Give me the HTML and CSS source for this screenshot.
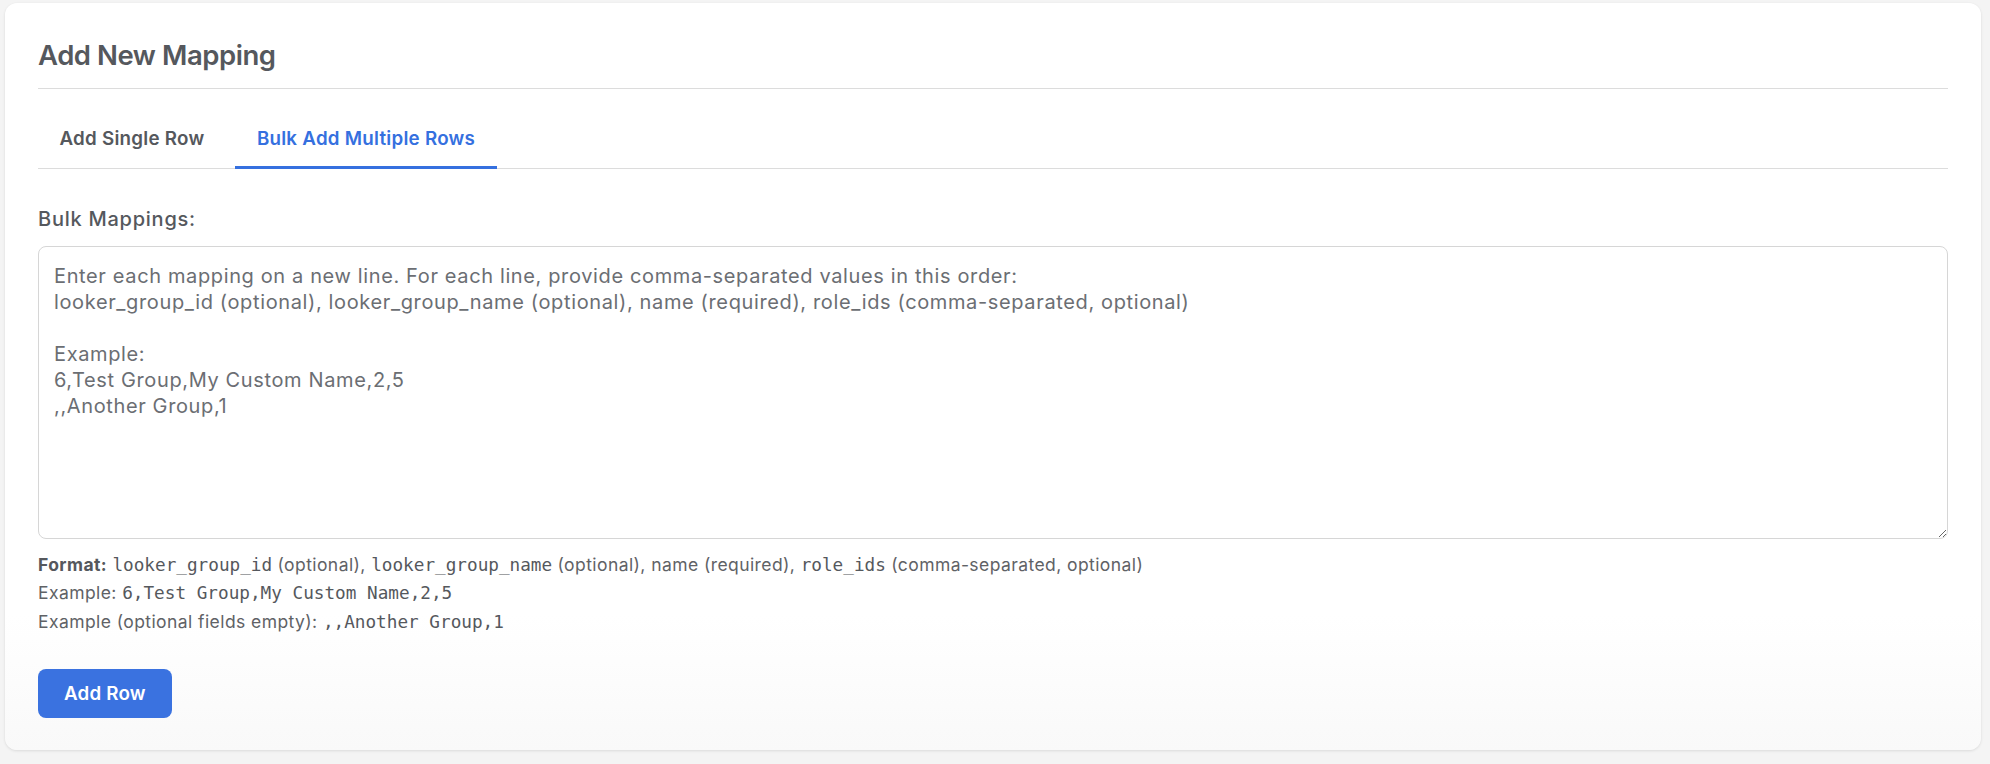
FILE: index.html
```html
<!DOCTYPE html>
<html lang="en">
<head>
<meta charset="utf-8">
<title>Add New Mapping</title>
<link rel="stylesheet" href="styles.css">
</head>
<body>
<div class="page">
  <section class="card">
    <h2 class="card-title">Add New Mapping</h2>
    <div class="tabs">
      <button class="tab">Add Single Row</button>
      <button class="tab tab-active">Bulk Add Multiple Rows</button>
    </div>
    <label class="field-label" for="bulk">Bulk Mappings:</label>
    <textarea id="bulk" class="bulk-input" placeholder="Enter each mapping on a new line. For each line, provide comma-separated values in this order:&#10;looker_group_id (optional), looker_group_name (optional), name (required), role_ids (comma-separated, optional)&#10;&#10;Example:&#10;6,Test Group,My Custom Name,2,5&#10;,,Another Group,1"></textarea>
    <div class="help">
      <div class="help-line"><strong>Format:</strong> <code>looker_group_id</code> (optional), <code>looker_group_name</code> (optional), name (required), <code>role_ids</code> (comma-separated, optional)</div>
      <div class="help-line">Example: <code>6,Test Group,My Custom Name,2,5</code></div>
      <div class="help-line">Example (optional fields empty): <code>,,Another Group,1</code></div>
    </div>
    <button class="btn-primary">Add Row</button>
  </section>
</div>
</body>
</html>
```

FILE: styles.css
```css
html, body {
  margin: 0;
  padding: 0;
  background: #f4f4f4;
}

body {
  font-family: Inter, "Noto Sans", "Liberation Sans", sans-serif;
  color: #55585d;
}

.page {
  padding: 3px 9px 13px 5px;
}

.card {
  background: linear-gradient(to bottom, #ffffff 82%, #f9f9f9 100%);
  border-radius: 12px;
  box-shadow: 0 1px 3px rgba(0, 0, 0, 0.10), 0 0 1px rgba(0, 0, 0, 0.06);
  padding: 33px 33px 32.4px 33px;
}

.card-title {
  margin: 2.4px 0 0 0;
  padding-bottom: 15.3px;
  border-bottom: 1px solid #dcdcdc;
  font-size: 27.5px;
  font-weight: 600;
  letter-spacing: -0.45px;
  line-height: normal;
  color: #55585d;
}

.tabs {
  display: flex;
  gap: 9.5px;
  margin-top: 22.8px;
  border-bottom: 1px solid #dcdcdc;
}

.tab {
  font-family: inherit;
  font-size: 18.75px;
  font-weight: 600;
  letter-spacing: 0.25px;
  line-height: normal;
  color: #55585d;
  background: none;
  border: none;
  border-bottom: 3px solid transparent;
  margin-bottom: -1px;
  padding: 16px 21.5px 15.3px;
  cursor: pointer;
}

.tab-active {
  color: #3570df;
  border-bottom-color: #3570df;
}

.field-label {
  display: block;
  margin-top: 38.6px;
  margin-bottom: 14.7px;
  font-size: 20px;
  font-weight: 500;
  letter-spacing: 0.75px;
  line-height: normal;
  color: #55585d;
}

.bulk-input {
  display: block;
  box-sizing: border-box;
  width: 100%;
  height: 293px;
  margin: 0;
  padding: 16px 15px;
  border: 1px solid #d6d6d6;
  border-radius: 8px;
  font-family: inherit;
  font-size: 20px;
  letter-spacing: 0.63px;
  line-height: 26px;
  color: #5f6266;
  background: #fff;
  resize: vertical;
  outline: none;
}

.bulk-input::placeholder {
  color: #6b6e73;
  opacity: 1;
}

.help {
  margin-top: 11.5px;
  font-size: 17.5px;
  letter-spacing: 0.42px;
  line-height: 28.7px;
  color: #5f6266;
}

.help strong {
  font-weight: 700;
  color: #55585d;
}

.help code {
  font-family: "DejaVu Sans Mono", "Liberation Mono", monospace;
  font-size: 17.7px;
  letter-spacing: 0;
  color: #55585d;
}

.btn-primary {
  display: block;
  margin-top: 32px;
  padding: 13.2px 26px;
  font-family: inherit;
  font-size: 18.75px;
  font-weight: 600;
  letter-spacing: 0.2px;
  line-height: normal;
  color: #ffffff;
  background: #3a72e0;
  border: none;
  border-radius: 8px;
  cursor: pointer;
}
```
